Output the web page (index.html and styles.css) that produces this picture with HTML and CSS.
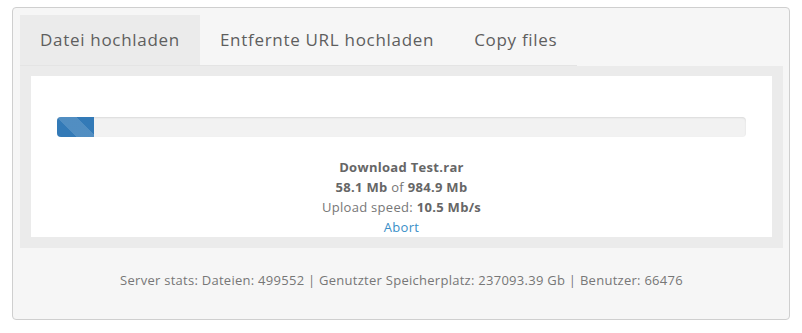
FILE: index.html
```html
<!DOCTYPE html>
<html>
<head>
    <title>Upload</title>
    <link rel="stylesheet" href="styles.css">
</head>
<body>
    <div class="upload-box">
        <ul class="tabs">
            <li class="active">Datei hochladen</li>
            <li>Entfernte URL hochladen</li>
            <li>Copy files</li>
        </ul>
        <div class="tab-panel">
            <div class="upload-inner">
                <div class="progress">
                    <div class="progress-bar" style="width: 5.4%;"></div>
                </div>
                <div class="upload-info">
                    <div><b>Download Test.rar</b></div>
                    <div><b>58.1 Mb</b> of <b>984.9 Mb</b></div>
                    <div>Upload speed: <b>10.5 Mb/s</b></div>
                    <div><a href="#">Abort</a></div>
                </div>
            </div>
        </div>
        <div class="stats">Server stats: Dateien: 499552 | Genutzter Speicherplatz: 237093.39 Gb | Benutzer: 66476</div>
    </div>
</body>
</html>
```

FILE: styles.css
```css
body {
    font-family: "Open Sans", Arial, sans-serif;
    margin: 0;
    padding: 7px 12px 0 12px;
    background: white;
    color: #777;
}
.upload-box {
    background: #f6f6f6;
    border: 1px solid #cfcfcf;
    border-radius: 4px;
    padding: 7px 6px 0 7px;
    height: 313px;
    box-sizing: border-box;
}
.tabs {
    list-style: none;
    margin: 0;
    padding: 0;
    display: flex;
    width: fit-content;
    border-bottom: 1px solid #e4e4e4;
}
.tabs li {
    height: 50px;
    line-height: 50px;
    padding: 0 20px;
    font-size: 17px;
    letter-spacing: 0.7px;
    color: #5e5e5e;
}
.tabs li.active {
    background: #ebebeb;
}
.tab-panel {
    background: #ebebeb;
    padding: 10px 11px 11px 11px;
}
.upload-inner {
    background: white;
    height: 161px;
    padding: 41px 26px 0 26px;
    box-sizing: border-box;
}
.progress {
    height: 20px;
    background: #f2f2f2;
    border-radius: 4px;
    box-shadow: inset 0 1px 2px rgba(0,0,0,0.1);
    overflow: hidden;
}
.progress-bar {
    height: 100%;
    background-color: #337ab7;
    background-image: linear-gradient(45deg, rgba(255,255,255,0.15) 25%, transparent 25%, transparent 50%, rgba(255,255,255,0.15) 50%, rgba(255,255,255,0.15) 75%, transparent 75%, transparent);
    background-size: 40px 40px;
}
.upload-info {
    margin-top: 20px;
    text-align: center;
    font-size: 13px;
    line-height: 20px;
    letter-spacing: 0.3px;
}
.upload-info b {
    color: #666;
}
.upload-info a {
    color: #3a8fc8;
    text-decoration: none;
}
.stats {
    text-align: center;
    font-size: 13px;
    line-height: 20px;
    letter-spacing: 0.27px;
    margin-top: 22px;
    color: #777;
}
```
